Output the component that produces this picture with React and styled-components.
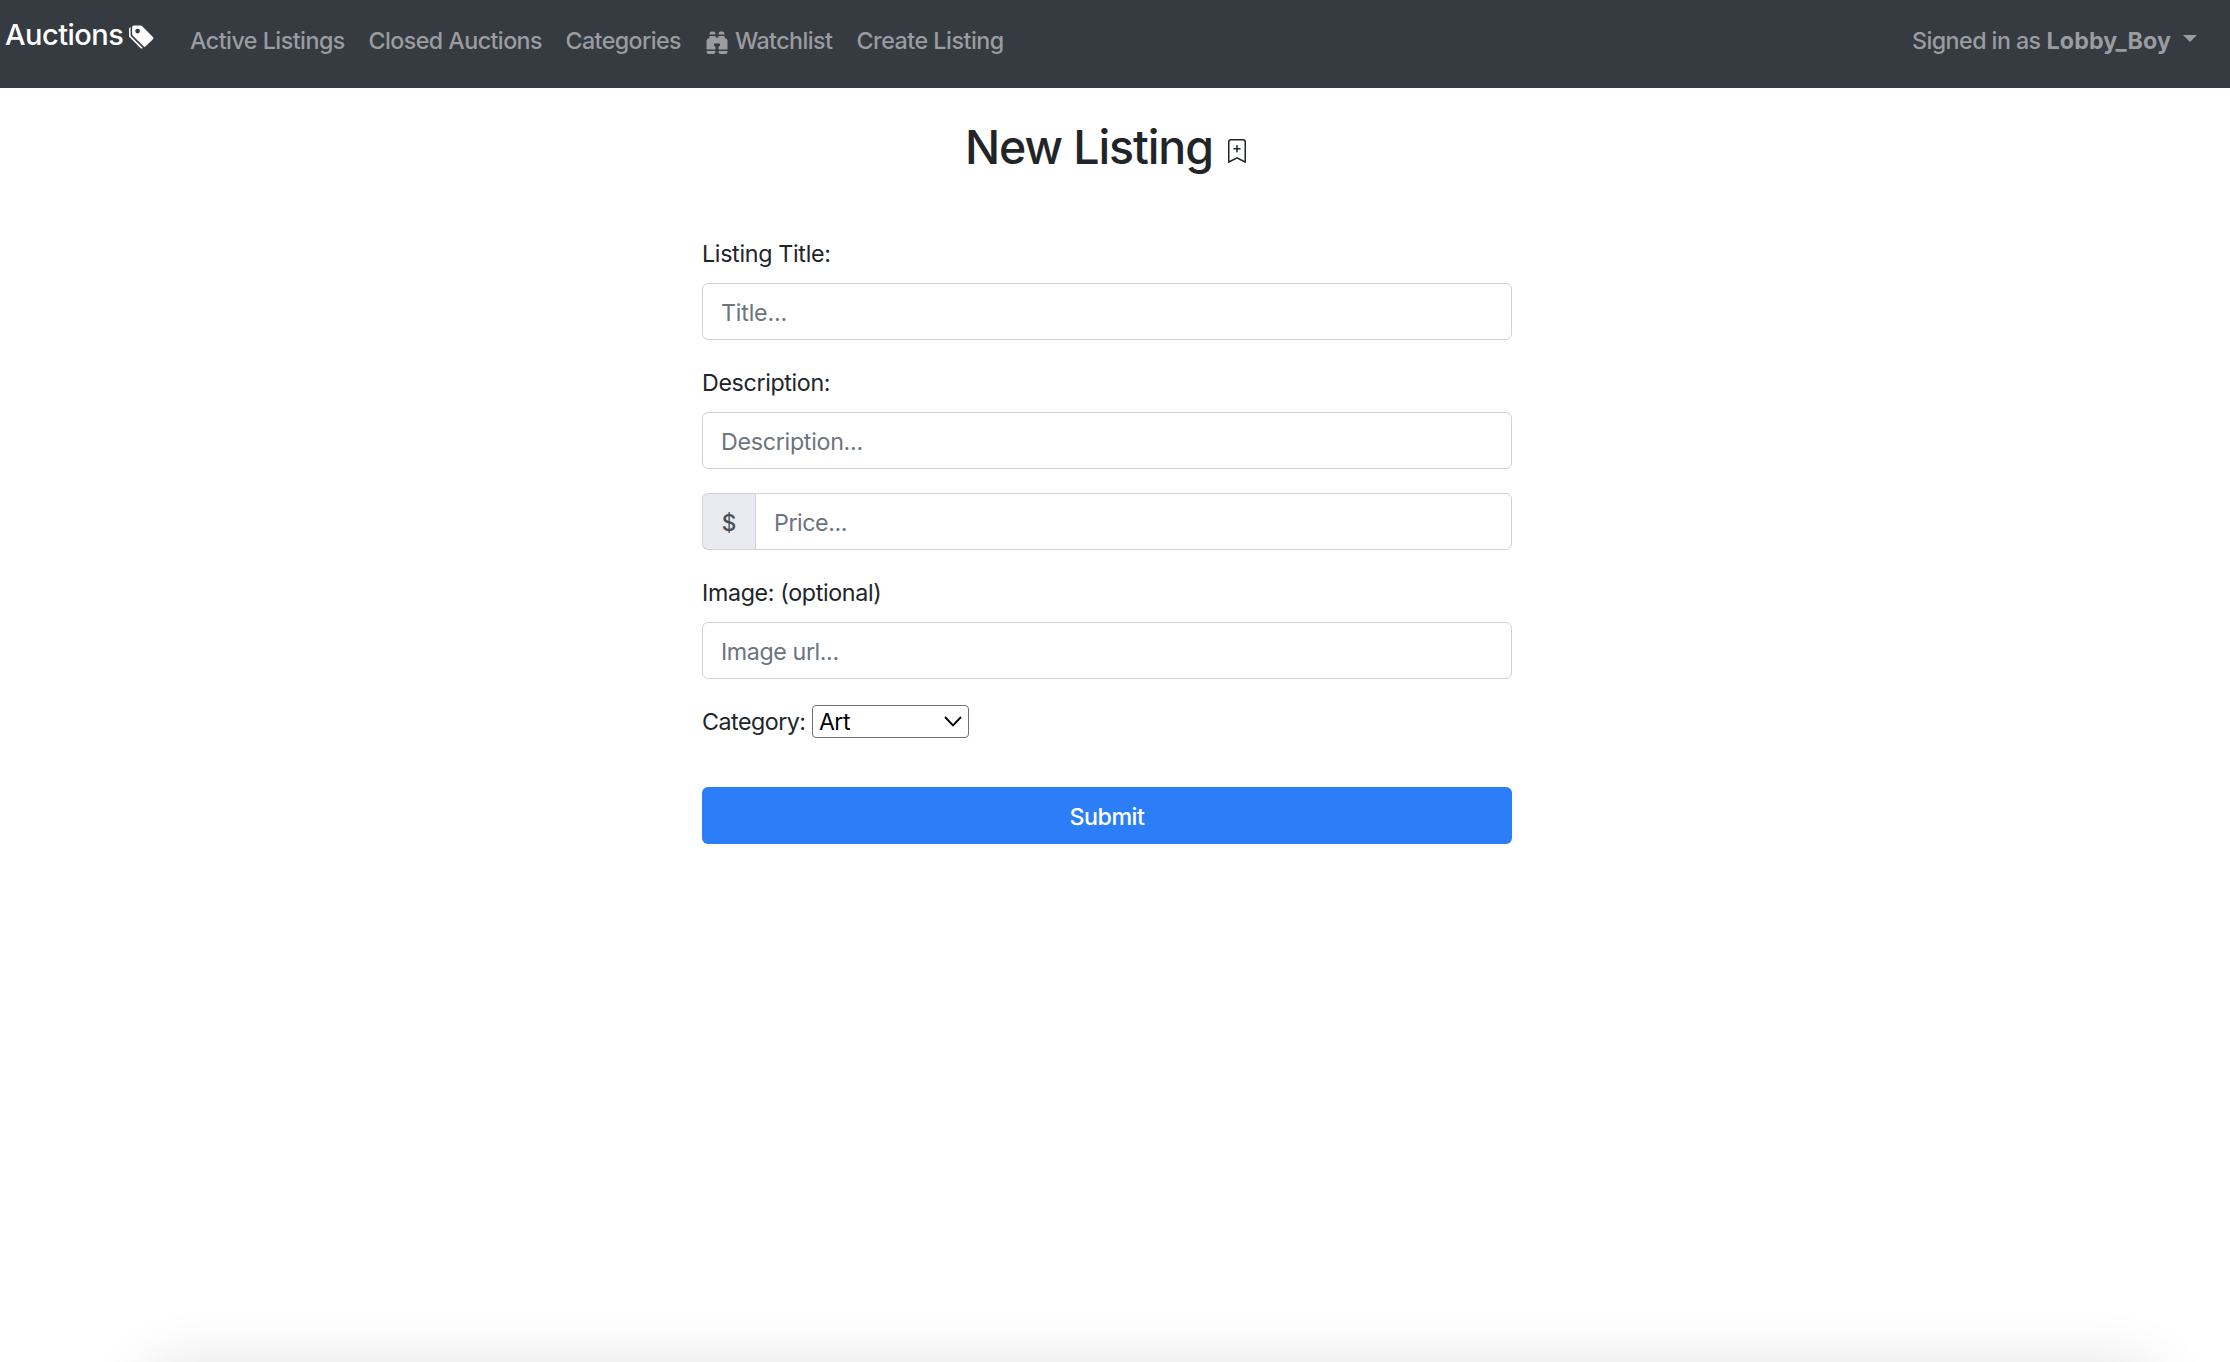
import React from 'react';
import styled, { createGlobalStyle } from 'styled-components';
import { BsTagsFill, BsBinocularsFill, BsBookmarkPlus } from 'react-icons/bs';

const GlobalStyle = createGlobalStyle`
  *, *::before, *::after { box-sizing: border-box; }
  body {
    margin: 0;
    background: #fff;
    color: #212529;
    font-family: Inter, "Liberation Sans", sans-serif;
    font-size: 23.25px;
    line-height: 36px;
  }
`;

const Page = styled.div`
  position: relative;
  height: 1362px;
  overflow: hidden;
`;

const Navbar = styled.nav`
  display: flex;
  align-items: flex-start;
  height: 88px;
  padding: 0 33px 0 5px;
  background: #363a41;
  font-weight: 500;
  white-space: nowrap;
`;

const Brand = styled.a`
  display: flex;
  width: 173px;
  padding-top: 12px;
  color: #fff;
  font-size: 29px;
  line-height: 45px;
  letter-spacing: -0.53px;

  svg {
    margin: 12px 0 0 6px;
  }
`;

const NavLink = styled.a`
  display: flex;
  width: ${(p) => p.$width}px;
  padding: 23px 12px 0;
  color: #9a9c9f;
  letter-spacing: ${(p) => p.$tracking}px;

  svg {
    flex: none;
    margin: 7px 6px 0 0;
  }
`;

const Account = styled.a`
  display: flex;
  align-items: flex-start;
  gap: 6px;
  margin-left: auto;
  padding-top: 23px;
  color: #9a9c9f;
  letter-spacing: -0.56px;
`;

const UserName = styled.strong`
  font-weight: 700;
  letter-spacing: 0.1px;
`;

const Caret = styled.span`
  margin: 12px 0 0 6px;
  border-top: 7px solid #9a9c9f;
  border-left: 7px solid transparent;
  border-right: 7px solid transparent;
`;

const Main = styled.main`
  width: 2214px;
  padding-top: 31px;
`;

const Heading = styled.h1`
  display: flex;
  justify-content: center;
  height: 116px;
  margin: 0;
  font-size: 46.5px;
  font-weight: 500;
  line-height: 57px;
  letter-spacing: -1.1px;

  svg {
    margin: 20px 0 0 12px;
  }
`;

const Form = styled.form`
  width: 810px;
  margin: 0 auto;
`;

const Group = styled.div`
  margin-bottom: 24px;
`;

const Label = styled.label`
  display: block;
  height: 36px;
  margin-bottom: 12px;
  padding-top: 1px;
  letter-spacing: ${(p) => p.$tracking}px;
`;

const Input = styled.input`
  display: block;
  width: 100%;
  height: 57px;
  padding: 2px 18px 0;
  border: 1px solid #cfd2d9;
  border-radius: 6px;
  background: #fff;
  color: #495057;
  font: inherit;
  letter-spacing: ${(p) => p.$tracking}px;
  outline: none;

  &::placeholder {
    color: #6c757d;
    opacity: 1;
  }
`;

const PriceGroup = styled.div`
  display: flex;
  margin-bottom: 24px;

  ${Input} {
    flex: 1;
    border-radius: 0 6px 6px 0;
  }
`;

const Prefix = styled.span`
  display: flex;
  align-items: center;
  justify-content: center;
  width: 53px;
  height: 57px;
  padding-top: 2px;
  border: 1px solid #cfd2d9;
  border-right: 0;
  border-radius: 6px 0 0 6px;
  background: #e9eaef;
  color: #495057;
  font-size: 22.5px;
  font-weight: 500;
`;

const CategoryRow = styled.div`
  display: flex;
  height: 84px;

  ${Label} {
    width: 110px;
    margin: 0;
  }
`;

const SelectBox = styled.div`
  position: relative;
  width: 157px;
  height: 33px;
  margin-top: 2px;

  svg {
    position: absolute;
    top: 11px;
    right: 7px;
    pointer-events: none;
  }
`;

const Select = styled.select`
  appearance: none;
  display: block;
  width: 100%;
  height: 100%;
  padding: 1px 30px 0 6px;
  border: 1px solid #707070;
  border-radius: 4px;
  background: #fff;
  color: #000;
  font: inherit;
  font-size: 23px;
  line-height: 30px;
  letter-spacing: -0.5px;
`;

const Submit = styled.button`
  display: block;
  width: 100%;
  height: 57px;
  padding: 2px 0 0;
  border: 0;
  border-radius: 6px;
  background: #2b7ef8;
  color: #fff;
  font: inherit;
  font-weight: 500;
  letter-spacing: -0.5px;
`;

const BottomShade = styled.div`
  position: absolute;
  top: 1371px;
  left: 146px;
  right: 76px;
  height: 200px;
  border-radius: 20px;
  box-shadow: 0 0 64px rgba(0, 0, 0, 0.14);
`;

const Chevron = () => (
  <svg width="18" height="11" viewBox="0 0 18 11" fill="none" stroke="#000" strokeWidth="1.9">
    <path d="M1 1l8 8.3L17 1" />
  </svg>
);

const links = [
  { text: 'Active Listings', width: 178.5, tracking: -0.51 },
  { text: 'Closed Auctions', width: 197, tracking: -0.56 },
  { text: 'Categories', width: 139.5, tracking: -0.6 },
  { text: 'Watchlist', width: 151.5, tracking: -0.58, icon: true },
  { text: 'Create Listing', width: 170, tracking: -0.48 },
];

export default function App() {
  return (
    <>
      <GlobalStyle />
      <Page>
        <Navbar>
          <Brand>
            Auctions
            <BsTagsFill size={25} />
          </Brand>
          {links.map((l) => (
            <NavLink key={l.text} $width={l.width} $tracking={l.tracking}>
              {l.icon && <BsBinocularsFill size={24} />}
              {l.text}
            </NavLink>
          ))}
          <Account>
            <span>Signed in as</span>
            <UserName>Lobby_Boy</UserName>
            <Caret />
          </Account>
        </Navbar>
        <Main>
          <Heading>
            New Listing
            <BsBookmarkPlus size={24} />
          </Heading>
          <Form onSubmit={(e) => e.preventDefault()}>
            <Group>
              <Label htmlFor="title" $tracking={-0.31}>Listing Title:</Label>
              <Input id="title" placeholder="Title..." $tracking={-0.2} />
            </Group>
            <Group>
              <Label htmlFor="description" $tracking={-0.36}>Description:</Label>
              <Input id="description" placeholder="Description..." $tracking={-0.29} />
            </Group>
            <PriceGroup>
              <Prefix>$</Prefix>
              <Input placeholder="Price..." $tracking={-0.44} />
            </PriceGroup>
            <Group>
              <Label htmlFor="image" $tracking={-0.34}>Image: (optional)</Label>
              <Input id="image" placeholder="Image url..." $tracking={-0.41} />
            </Group>
            <CategoryRow>
              <Label htmlFor="category" $tracking={-0.5}>Category:</Label>
              <SelectBox>
                <Select id="category" defaultValue="Art">
                  <option>Art</option>
                </Select>
                <Chevron />
              </SelectBox>
            </CategoryRow>
            <Submit type="submit">Submit</Submit>
          </Form>
        </Main>
        <BottomShade />
      </Page>
    </>
  );
}
